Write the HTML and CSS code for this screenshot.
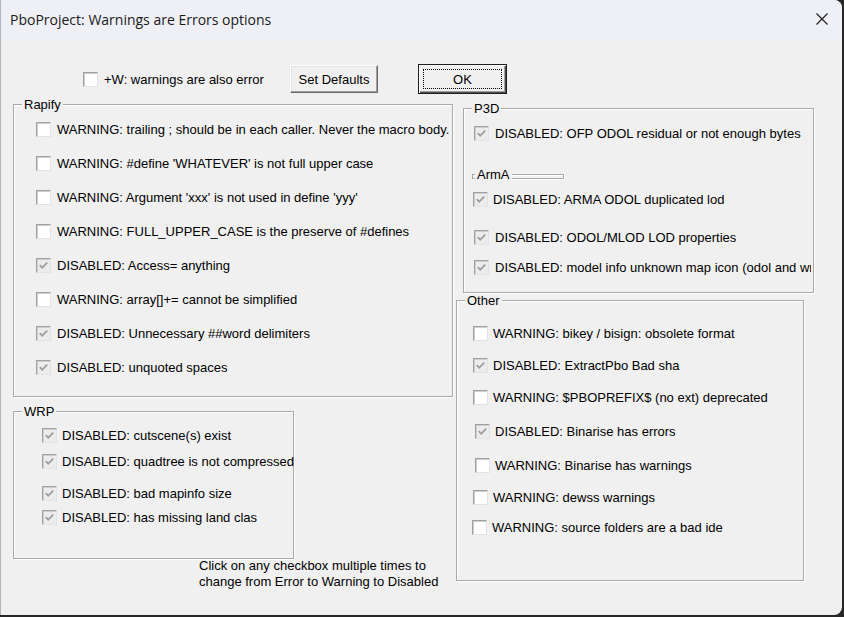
FILE: index.html
```html
<!DOCTYPE html>
<html>
<head>
<meta charset="utf-8">
<link rel="stylesheet" href="styles.css">
</head>
<body>
<div class="window">
  <div class="titlebar">
    <span class="title">PboProject: Warnings are Errors options</span>
    <svg class="close" width="12" height="12" viewBox="0 0 12 12"><path d="M0.5 0.5 L11.5 11.5 M11.5 0.5 L0.5 11.5" stroke="#1b1b1b" stroke-width="1.1" fill="none"/></svg>
  </div>
  <div class="client">
    <div class="toprow">
      <div class="row topchk"><span class="cb"></span><span class="lbl">+W: warnings are also error</span></div>
      <div class="btn">Set Defaults</div>
      <div class="btn default"><span class="focus">OK</span></div>
    </div>
    <div class="columns">
      <div class="col-left">
        <div class="group rapify">
          <span class="legend">Rapify</span>
          <div class="rows">
            <div class="row"><span class="cb"></span><span class="lbl">WARNING: trailing ; should be in each caller. Never the macro body.</span></div>
            <div class="row"><span class="cb"></span><span class="lbl">WARNING: #define 'WHATEVER' is not full upper case</span></div>
            <div class="row"><span class="cb"></span><span class="lbl">WARNING: Argument 'xxx' is not used in define 'yyy'</span></div>
            <div class="row"><span class="cb"></span><span class="lbl">WARNING: FULL_UPPER_CASE is the preserve of #defines</span></div>
            <div class="row"><span class="cb checked"><svg viewBox="0 0 13 13" width="13" height="13"><polyline points="2.8,6.2 5.2,8.8 10.2,3.6" fill="none" stroke="#9c9c9c" stroke-width="1.8"/></svg></span><span class="lbl">DISABLED: Access= anything</span></div>
            <div class="row"><span class="cb"></span><span class="lbl">WARNING: array[]+= cannot be simplified</span></div>
            <div class="row"><span class="cb checked"><svg viewBox="0 0 13 13" width="13" height="13"><polyline points="2.8,6.2 5.2,8.8 10.2,3.6" fill="none" stroke="#9c9c9c" stroke-width="1.8"/></svg></span><span class="lbl">DISABLED: Unnecessary ##word delimiters</span></div>
            <div class="row"><span class="cb checked"><svg viewBox="0 0 13 13" width="13" height="13"><polyline points="2.8,6.2 5.2,8.8 10.2,3.6" fill="none" stroke="#9c9c9c" stroke-width="1.8"/></svg></span><span class="lbl">DISABLED: unquoted spaces</span></div>
          </div>
        </div>
        <div class="group wrp">
          <span class="legend">WRP</span>
          <div class="rows">
            <div class="row"><span class="cb checked"><svg viewBox="0 0 13 13" width="13" height="13"><polyline points="2.8,6.2 5.2,8.8 10.2,3.6" fill="none" stroke="#9c9c9c" stroke-width="1.8"/></svg></span><span class="lbl">DISABLED: cutscene(s) exist</span></div>
            <div class="row"><span class="cb checked"><svg viewBox="0 0 13 13" width="13" height="13"><polyline points="2.8,6.2 5.2,8.8 10.2,3.6" fill="none" stroke="#9c9c9c" stroke-width="1.8"/></svg></span><span class="lbl">DISABLED: quadtree is not compressed</span></div>
            <div class="row"><span class="cb checked"><svg viewBox="0 0 13 13" width="13" height="13"><polyline points="2.8,6.2 5.2,8.8 10.2,3.6" fill="none" stroke="#9c9c9c" stroke-width="1.8"/></svg></span><span class="lbl">DISABLED: bad mapinfo size</span></div>
            <div class="row"><span class="cb checked"><svg viewBox="0 0 13 13" width="13" height="13"><polyline points="2.8,6.2 5.2,8.8 10.2,3.6" fill="none" stroke="#9c9c9c" stroke-width="1.8"/></svg></span><span class="lbl">DISABLED: has missing land clas</span></div>
          </div>
        </div>
        <div class="note">Click on any checkbox multiple times to<br>change from Error to Warning to Disabled</div>
      </div>
      <div class="col-right">
        <div class="group p3d">
          <span class="legend">P3D</span>
          <div class="rows">
            <div class="row"><span class="cb checked"><svg viewBox="0 0 13 13" width="13" height="13"><polyline points="2.8,6.2 5.2,8.8 10.2,3.6" fill="none" stroke="#9c9c9c" stroke-width="1.8"/></svg></span><span class="lbl">DISABLED: OFP ODOL residual or not enough bytes</span></div>
            <div class="group arma"><span class="legend">ArmA</span></div>
            <div class="row"><span class="cb checked"><svg viewBox="0 0 13 13" width="13" height="13"><polyline points="2.8,6.2 5.2,8.8 10.2,3.6" fill="none" stroke="#9c9c9c" stroke-width="1.8"/></svg></span><span class="lbl">DISABLED: ARMA ODOL duplicated lod</span></div>
            <div class="row"><span class="cb checked"><svg viewBox="0 0 13 13" width="13" height="13"><polyline points="2.8,6.2 5.2,8.8 10.2,3.6" fill="none" stroke="#9c9c9c" stroke-width="1.8"/></svg></span><span class="lbl">DISABLED: ODOL/MLOD LOD properties</span></div>
            <div class="row"><span class="cb checked"><svg viewBox="0 0 13 13" width="13" height="13"><polyline points="2.8,6.2 5.2,8.8 10.2,3.6" fill="none" stroke="#9c9c9c" stroke-width="1.8"/></svg></span><span class="lbl">DISABLED: model info unknown map icon (odol and wrp)</span></div>
          </div>
        </div>
        <div class="group other">
          <span class="legend">Other</span>
          <div class="rows">
            <div class="row"><span class="cb"></span><span class="lbl">WARNING: bikey / bisign: obsolete format</span></div>
            <div class="row"><span class="cb checked"><svg viewBox="0 0 13 13" width="13" height="13"><polyline points="2.8,6.2 5.2,8.8 10.2,3.6" fill="none" stroke="#9c9c9c" stroke-width="1.8"/></svg></span><span class="lbl">DISABLED: ExtractPbo Bad sha</span></div>
            <div class="row"><span class="cb"></span><span class="lbl">WARNING: $PBOPREFIX$ (no ext) deprecated</span></div>
            <div class="row"><span class="cb checked"><svg viewBox="0 0 13 13" width="13" height="13"><polyline points="2.8,6.2 5.2,8.8 10.2,3.6" fill="none" stroke="#9c9c9c" stroke-width="1.8"/></svg></span><span class="lbl">DISABLED: Binarise has errors</span></div>
            <div class="row"><span class="cb"></span><span class="lbl">WARNING: Binarise has warnings</span></div>
            <div class="row"><span class="cb"></span><span class="lbl">WARNING: dewss warnings</span></div>
            <div class="row"><span class="cb"></span><span class="lbl">WARNING: source folders are a bad ide</span></div>
          </div>
        </div>
      </div>
    </div>
  </div>
</div>
</body>
</html>
```
FILE: styles.css
```css
html, body {
  margin: 0;
  padding: 0;
  background: #262626;
}
body {
  width: 844px;
  height: 617px;
  overflow: hidden;
  font-family: "Liberation Sans", Arial, sans-serif;
  font-size: 13px;
  color: #000;
}
.window {
  width: 841px;
  height: 615px;
  background: #f0f0f0;
  border-left: 1px solid #b4b4b4;
  border-radius: 0 8px 8px 0;
  overflow: hidden;
}
.titlebar {
  height: 40px;
  background: #eff0f6;
  display: flex;
  align-items: center;
  justify-content: space-between;
  padding: 0 14px 0 9px;
}
.title {
  font-family: "Open Sans", "Noto Sans", sans-serif;
  font-size: 14px;
  color: #1a1a1a;
  margin-top: -2px;
}
.close {
  margin-top: -2px;
  display: block;
}
.toprow {
  display: flex;
  align-items: center;
  height: 30px;
  margin-top: 24px;
  padding-left: 82px;
}
.topchk {
  width: 207px;
}
.btn {
  box-sizing: border-box;
  width: 88px;
  height: 28px;
  display: flex;
  align-items: center;
  justify-content: center;
  border: 1px solid;
  border-color: #ffffff #696969 #696969 #ffffff;
  box-shadow: inset -1px -1px #a0a0a0, inset 1px 1px #e3e3e3;
  background: #f0f0f0;
}
.btn.default {
  width: 89px;
  height: 30px;
  margin-left: 40px;
  border: 1px solid #1e1e1e;
  box-shadow: inset 1px 1px #ffffff, inset -1px -1px #4a4a4a, inset -2px -2px #a0a0a0;
  padding: 4px;
}
.focus {
  box-sizing: border-box;
  width: 100%;
  height: 100%;
  border: 1px dotted #000;
  display: flex;
  align-items: center;
  justify-content: center;
}
.columns {
  display: flex;
  align-items: flex-start;
  margin-top: 10px;
}
.col-left {
  width: 440px;
  margin-left: 12px;
}
.col-right {
  margin-left: 3px;
  margin-top: 4px;
}
.group {
  box-sizing: border-box;
  border: 1px solid #a9a9a9;
  box-shadow: inset 1px 1px #ffffff, 1px 1px #ffffff;
}
.legend {
  display: block;
  width: fit-content;
  height: 14px;
  line-height: 14px;
  margin: -7px 0 0 8px;
  padding: 0 2px;
  background: #f0f0f0;
}
.rows {
  display: flex;
  flex-direction: column;
}
.row {
  display: flex;
  align-items: center;
  height: 15px;
  gap: 6px;
  white-space: nowrap;
}
.lbl {
  line-height: 15px;
}
.cb {
  box-sizing: border-box;
  flex: none;
  width: 15px;
  height: 15px;
  background: #ffffff;
  border: 1px solid;
  border-color: #a0a0a0 #e3e3e3 #e3e3e3 #a0a0a0;
  box-shadow: inset 1px 1px #cfcfcf;
}
.cb svg {
  display: block;
}
.cb.checked {
  background: #ececec;
}

/* Rapify */
.rapify {
  width: 440px;
  height: 293px;
}
.rapify .rows {
  padding-left: 22px;
}
.rapify .row {
  margin-top: 19px;
}
.rapify .row:first-child {
  margin-top: 10px;
}

/* WRP */
.wrp {
  width: 281px;
  height: 148px;
  margin-top: 14px;
}
.wrp .rows {
  padding-left: 28px;
}
.wrp .row {
  gap: 5px;
}
.wrp .row:nth-child(1) { margin-top: 9px; }
.wrp .row:nth-child(2) { margin-top: 11px; }
.wrp .row:nth-child(3) { margin-top: 17px; }
.wrp .row:nth-child(4) { margin-top: 9px; }

.note {
  margin: -1px 0 0 186px;
  line-height: 16px;
  white-space: nowrap;
}

/* P3D */
.p3d {
  width: 351px;
  height: 185px;
  margin-left: 7px;
}
.p3d .rows {
  padding-left: 10px;
  margin-right: 2px;
  overflow: hidden;
}
.p3d .rows > :nth-child(1) { margin-top: 10px; }
.p3d .rows > :nth-child(2) { margin-top: 33px; }
.p3d .rows > :nth-child(3) { margin-top: 13px; margin-left: -1px; gap: 5px; }
.p3d .rows > :nth-child(4) { margin-top: 23px; }
.p3d .rows > :nth-child(5) { margin-top: 15px; }

.arma {
  flex: none;
  width: 92px;
  height: 5px;
  margin-left: -2px;
}
.arma .legend {
  margin-left: 2px;
}

/* Other */
.other {
  width: 348px;
  height: 281px;
  margin-top: 7px;
}
.other .rows {
  padding-left: 16px;
}
.other .row {
  gap: 5px;
}
.other .row:nth-child(1) { margin-top: 18px; }
.other .row:nth-child(2) { margin-top: 17px; }
.other .row:nth-child(3) { margin-top: 17px; }
.other .row:nth-child(4) { margin-top: 19px; margin-left: 2px; }
.other .row:nth-child(5) { margin-top: 19px; margin-left: 2px; }
.other .row:nth-child(6) { margin-top: 17px; }
.other .row:nth-child(7) { margin-top: 15px; margin-left: -1px; }
```
